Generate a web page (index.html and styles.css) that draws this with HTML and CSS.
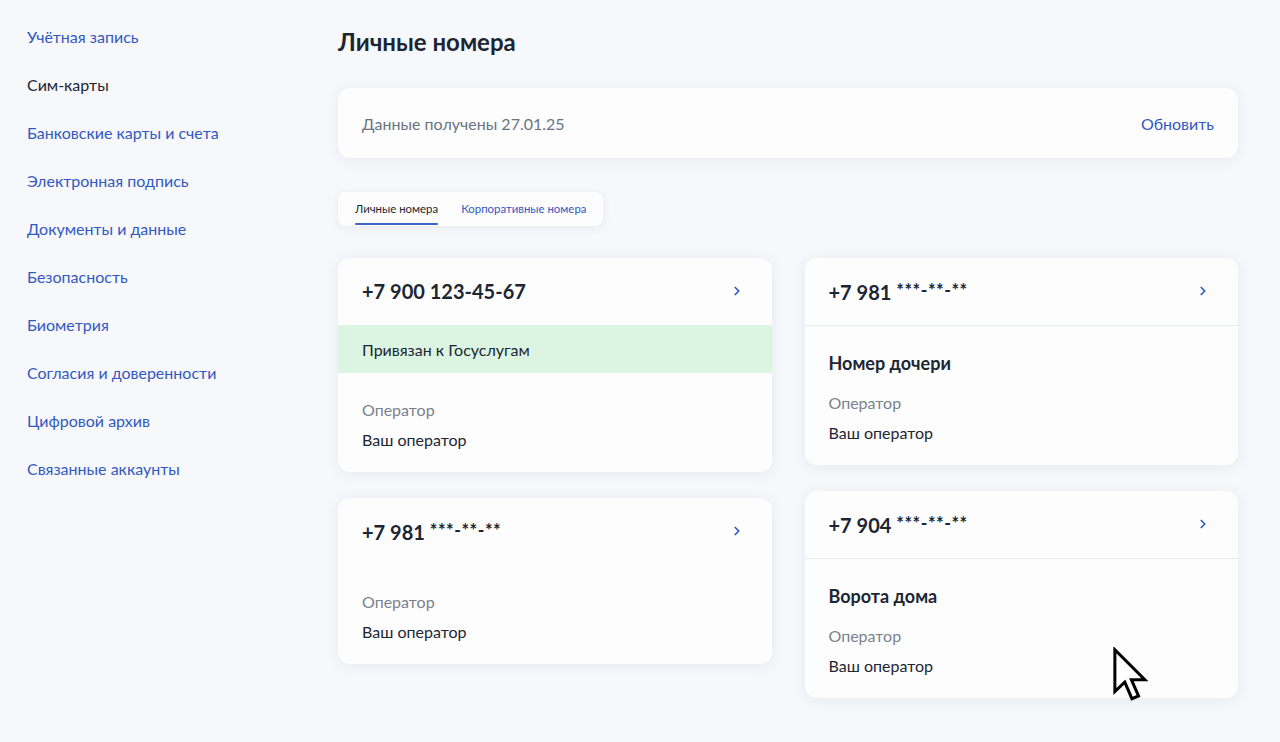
FILE: index.html
```html
<!DOCTYPE html>
<html lang="ru">
<head>
<meta charset="utf-8">
<title>Личные номера</title>
<link rel="stylesheet" href="styles.css">
</head>
<body>
<div class="page">
  <nav class="sidebar">
    <a class="nav-item">Учётная запись</a>
    <a class="nav-item active">Сим-карты</a>
    <a class="nav-item">Банковские карты и счета</a>
    <a class="nav-item">Электронная подпись</a>
    <a class="nav-item">Документы и данные</a>
    <a class="nav-item">Безопасность</a>
    <a class="nav-item">Биометрия</a>
    <a class="nav-item">Согласия и доверенности</a>
    <a class="nav-item">Цифровой архив</a>
    <a class="nav-item">Связанные аккаунты</a>
  </nav>
  <main class="main">
    <h1 class="title">Личные номера</h1>
    <div class="info-card">
      <span class="info-text">Данные получены 27.01.25</span>
      <a class="info-link">Обновить</a>
    </div>
    <div class="tabs">
      <span class="tab active">Личные номера</span>
      <span class="tab">Корпоративные номера</span>
    </div>
    <div class="grid">
      <div class="col">
        <div class="card">
          <div class="card-head">
            <span class="phone">+7 900 123-45-67</span>
            <svg class="chev" viewBox="0 0 16 16"><path d="M6 4l4 4-4 4" fill="none" stroke="#3358c0" stroke-width="2" stroke-linecap="round" stroke-linejoin="round"/></svg>
          </div>
          <div class="bound">Привязан к Госуслугам</div>
          <div class="card-body">
            <div class="lbl">Оператор</div>
            <div class="val">Ваш оператор</div>
          </div>
        </div>
        <div class="card">
          <div class="card-head">
            <span class="phone">+7 981 <span class="mask">***-**-**</span></span>
            <svg class="chev" viewBox="0 0 16 16"><path d="M6 4l4 4-4 4" fill="none" stroke="#3358c0" stroke-width="2" stroke-linecap="round" stroke-linejoin="round"/></svg>
          </div>
          <div class="card-body">
            <div class="lbl">Оператор</div>
            <div class="val">Ваш оператор</div>
          </div>
        </div>
      </div>
      <div class="col">
        <div class="card">
          <div class="card-head divided">
            <span class="phone">+7 981 <span class="mask">***-**-**</span></span>
            <svg class="chev" viewBox="0 0 16 16"><path d="M6 4l4 4-4 4" fill="none" stroke="#3358c0" stroke-width="2" stroke-linecap="round" stroke-linejoin="round"/></svg>
          </div>
          <div class="card-body">
            <div class="name">Номер дочери</div>
            <div class="lbl">Оператор</div>
            <div class="val">Ваш оператор</div>
          </div>
        </div>
        <div class="card">
          <div class="card-head divided">
            <span class="phone">+7 904 <span class="mask">***-**-**</span></span>
            <svg class="chev" viewBox="0 0 16 16"><path d="M6 4l4 4-4 4" fill="none" stroke="#3358c0" stroke-width="2" stroke-linecap="round" stroke-linejoin="round"/></svg>
          </div>
          <div class="card-body">
            <div class="name">Ворота дома</div>
            <div class="lbl">Оператор</div>
            <div class="val">Ваш оператор</div>
          </div>
        </div>
      </div>
    </div>
  </main>
</div>
<svg class="cursor" viewBox="0 0 13 20"><path d="M1 1 L1 16.2 L4.6 12.8 L7.2 18.8 L9.6 17.8 L7 11.9 L11.9 11.9 Z" fill="#fff" stroke="#000" stroke-width="1.1" stroke-linejoin="miter"/></svg>
</body>
</html>
```
FILE: styles.css
```css
* { box-sizing: border-box; }
html, body {
  margin: 0;
  padding: 0;
  background: #f6f8fb;
  font-family: Lato, "Noto Sans", sans-serif;
  color: #1c2632;
}
.page {
  display: flex;
  min-height: 742px;
}
.sidebar {
  width: 338px;
  flex: none;
  padding: 25px 0 0 27px;
  display: flex;
  flex-direction: column;
  gap: 24px;
}
.nav-item {
  font-size: 16px;
  line-height: 24px;
  color: #3358c0;
}
.nav-item.active { color: #1c2632; }
.main {
  width: 900px;
  flex: none;
  padding-top: 24px;
}
.title {
  margin: 0 0 28px;
  font-size: 24px;
  line-height: 36px;
  font-weight: 700;
  color: #1c2632;
}
.info-card {
  height: 70px;
  background: #fdfdfe;
  border-radius: 12px;
  box-shadow: 0 2px 14px rgba(40, 60, 100, 0.08);
  padding: 0 24px;
  display: flex;
  align-items: center;
  justify-content: space-between;
  font-size: 16px;
}
.info-text { color: #6a737e; }
.info-link { color: #3358c0; }
.tabs {
  margin-top: 34px;
  display: inline-flex;
  gap: 23px;
  height: 34px;
  padding: 0 17px;
  background: #fdfdfe;
  border-radius: 8px;
  box-shadow: 0 2px 10px rgba(40, 60, 100, 0.07);
}
.tab {
  font-size: 11.4px;
  line-height: 34px;
  color: #3358c0;
  position: relative;
}
.tab.active { color: #1c2632; }
.tab.active::after {
  content: "";
  position: absolute;
  left: 0;
  right: 0;
  bottom: 1px;
  height: 2px;
  border-radius: 1px;
  background: #3f64c8;
}
.grid {
  margin-top: 32px;
  display: grid;
  grid-template-columns: 1fr 1fr;
  column-gap: 33px;
  align-items: start;
}
.col {
  display: flex;
  flex-direction: column;
  gap: 26px;
}
.card {
  background: #fdfdfe;
  border-radius: 12px;
  box-shadow: 0 2px 14px rgba(40, 60, 100, 0.08);
  overflow: hidden;
}
.card-head {
  height: 67px;
  padding: 0 28px 1px 24px;
  display: flex;
  align-items: center;
  justify-content: space-between;
}
.card-head.divided { border-bottom: 1px solid #e6ebf2; height: 68px; }
.phone {
  font-size: 20px;
  line-height: 26px;
  font-weight: 700;
  color: #1c2632;
}
.mask { font-weight: 700; font-size: 18px; letter-spacing: 0.5px; vertical-align: 3px; }
.chev { width: 14px; height: 14px; }
.bound {
  height: 48px;
  background: #dcf5e2;
  padding: 0 24px;
  display: flex;
  align-items: center;
  font-size: 16px;
  color: #1c2632;
}
.card-body {
  padding: 25px 24px 20px;
  font-size: 16px;
  line-height: 24px;
}
.name {
  font-size: 18px;
  font-weight: 700;
  margin-bottom: 16px;
  color: #1c2632;
}
.lbl { color: #7a828c; }
.val { margin-top: 6px; color: #1c2632; }
.cursor {
  position: absolute;
  left: 1112px;
  top: 647px;
  width: 36px;
  height: 55px;
}
```
